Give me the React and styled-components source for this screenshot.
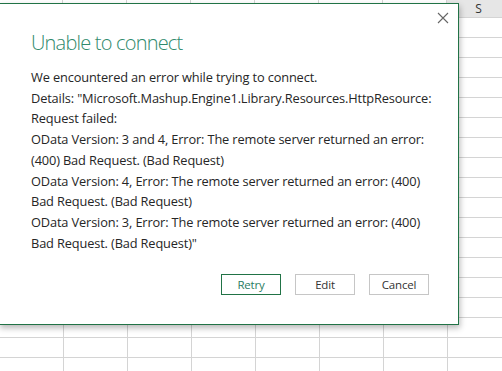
import React from "react";
import styled, { createGlobalStyle } from "styled-components";

const GlobalStyle = createGlobalStyle`
  html, body {
    margin: 0;
    padding: 0;
    background: #ffffff;
    font-family: "Open Sans", "Noto Sans", sans-serif;
    overflow: hidden;
  }
`;

//Spreadsheet behind the dialog
const Sheet = styled.div`
  position: relative;
  width: 502px;
  height: 371px;
  overflow: hidden;
  background-color: #ffffff;
`;

const HeaderRow = styled.div`
  display: flex;
  height: 17px;
  margin-left: -1px;
  border-bottom: 1px solid #d4d4d4;
`;

const HeaderCell = styled.div`
  flex: 0 0 64px;
  box-sizing: border-box;
  border-right: 1px solid #d4d4d4;
  background-color: ${({ $active }) => ($active ? "#e6e6e6" : "#ffffff")};
  color: #333;
  font-size: 12px;
  line-height: 17px;
  text-align: center;
`;

const Cells = styled.div`
  height: 353px;
  background-image:
    repeating-linear-gradient(to right, transparent 0 63px, #d4d4d4 63px 64px),
    repeating-linear-gradient(to bottom, transparent 0 19px, #d4d4d4 19px 20px);
`;

//Dialog
const Dialog = styled.div`
  position: absolute;
  left: -1px;
  top: 3px;
  width: 460px;
  height: 322px;
  box-sizing: border-box;
  border: 1px solid #217346;
  background: #ffffff;
  box-shadow: 1px 3px 6px rgba(0, 0, 0, 0.28);
  display: flex;
  flex-direction: column;
  padding: 25px 29px 0 31px;
`;

const CloseButton = styled.button`
  position: absolute;
  top: 6px;
  right: 7px;
  width: 16px;
  height: 16px;
  padding: 0;
  border: none;
  background: transparent;
  display: grid;
  place-items: center;
  cursor: pointer;
`;

const Title = styled.h1`
  margin: 0;
  font-weight: 300;
  font-size: 20px;
  line-height: 28px;
  color: #2f8a6c;
  letter-spacing: -0.8px;
`;

const Message = styled.div`
  margin-top: 10px;
  display: flex;
  flex-direction: column;
  color: #262626;
  font-size: 12.8px;
  line-height: 20.7px;
`;

const Line = styled.div`
  white-space: nowrap;
  letter-spacing: -0.14px;
`;

const Actions = styled.div`
  display: flex;
  justify-content: flex-end;
  gap: 14px;
  margin-top: 21px;
`;

const Button = styled.button`
  width: 60px;
  height: 21px;
  box-sizing: border-box;
  padding: 0;
  background: #ffffff;
  border: 1px solid ${({ $primary }) => ($primary ? "#217346" : "#c6c6c6")};
  color: ${({ $primary }) => ($primary ? "#2a7d63" : "#333")};
  font-family: "Open Sans", "Noto Sans", sans-serif;
  font-size: 11.5px;
  letter-spacing: -0.2px;
  cursor: pointer;
`;

const lines = [
  "We encountered an error while trying to connect.",
  'Details: "Microsoft.Mashup.Engine1.Library.Resources.HttpResource:',
  "Request failed:",
  "OData Version: 3 and 4, Error: The remote server returned an error:",
  "(400) Bad Request. (Bad Request)",
  "OData Version: 4, Error: The remote server returned an error: (400)",
  "Bad Request. (Bad Request)",
  "OData Version: 3, Error: The remote server returned an error: (400)",
  'Bad Request. (Bad Request)"',
];

const columns = ["L", "M", "N", "O", "P", "Q", "R", "S"];

export default function App() {
  return (
    <>
      <GlobalStyle />
      <Sheet>
        <HeaderRow>
          {columns.map((c) => (
            <HeaderCell key={c} $active={c === "S"}>
              {c}
            </HeaderCell>
          ))}
        </HeaderRow>
        <Cells />
        <Dialog>
          <CloseButton aria-label="Close">
            <svg width="12" height="12" viewBox="0 0 12 12">
              <path d="M1 1 L11 11 M11 1 L1 11" stroke="#666" strokeWidth="1.1" />
            </svg>
          </CloseButton>
          <Title>Unable to connect</Title>
          <Message>
            {lines.map((l, i) => (
              <Line key={i}>{l}</Line>
            ))}
          </Message>
          <Actions>
            <Button $primary>Retry</Button>
            <Button>Edit</Button>
            <Button>Cancel</Button>
          </Actions>
        </Dialog>
      </Sheet>
    </>
  );
}
